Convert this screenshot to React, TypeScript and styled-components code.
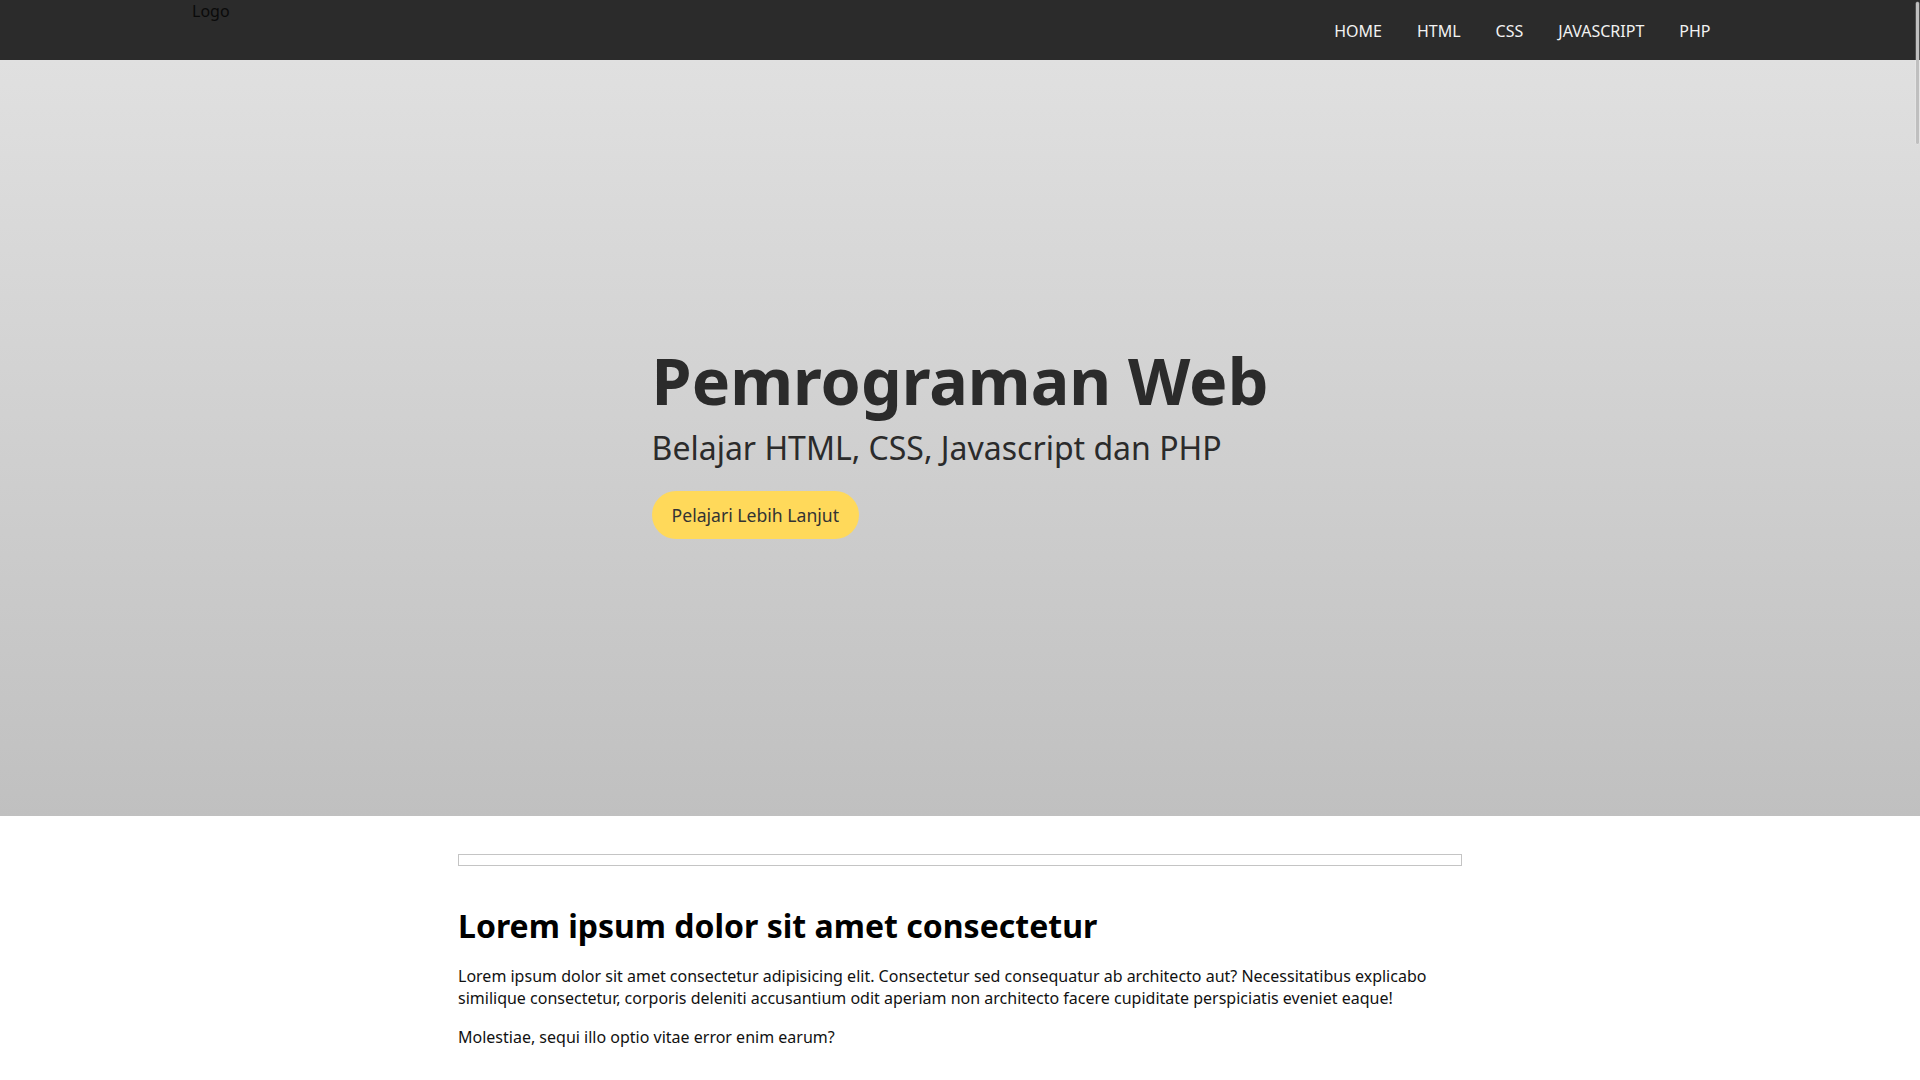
import React from "react";
import styled, { createGlobalStyle } from "styled-components";

const GlobalStyle = createGlobalStyle`
  * { box-sizing: border-box; }
  html, body { margin: 0; padding: 0; }
  body {
    font-family: "Noto Sans", "Open Sans", sans-serif;
    font-size: 16px;
    line-height: 1.4;
    color: #111;
    background: #fff;
  }
  ::-webkit-scrollbar { width: 4px; }
  ::-webkit-scrollbar-track { background: transparent; }
  ::-webkit-scrollbar-thumb { background: #c0c0c0; border-radius: 2px; }
`;

const ScrollThumb = styled.div`
  position: fixed;
  top: 2px;
  right: 1px;
  width: 3px;
  height: 142px;
  border-radius: 2px;
  background: #bfbfbf;
  box-shadow: 0 0 0 0.5px rgba(255, 255, 255, 0.35);
  pointer-events: none;
  z-index: 10;
`;

const Header = styled.header`
  height: 60px;
  background: #2b2b2b;
`;

const HeaderInner = styled.div`
  width: 80%;
  height: 100%;
  margin: 0 auto;
  display: flex;
  justify-content: space-between;
  align-items: center;
`;

const Logo = styled.div`
  align-self: flex-start;
  color: #0a0a0a;
  font-size: 16px;
`;

const NavList = styled.ul`
  list-style: none;
  margin: 0;
  padding: 0;
  display: flex;
  align-items: center;
`;

const NavItem = styled.li`
  padding: 0 17.5px;
  position: relative;
  top: 1px;
`;

const NavLink = styled.a`
  color: #f2f2f2;
  text-decoration: none;
  font-size: 16px;
`;

const Hero = styled.section`
  height: 70vh;
  background: linear-gradient(#e0e0e0, #c0c0c0);
  display: flex;
  align-items: center;
  justify-content: center;
`;

const HeroContent = styled.div`
  color: #2b2b2b;
`;

const HeroTitle = styled.h1`
  margin: 0;
  font-size: 64.5px;
  line-height: 87px;
  font-weight: 700;
`;

const HeroSubtitle = styled.p`
  margin: 0;
  font-size: 32px;
  line-height: 48px;
  font-weight: 400;
`;

const HeroButton = styled.a`
  display: inline-flex;
  align-items: center;
  height: 48px;
  margin-top: 19px;
  padding: 0 20px;
  border-radius: 24px;
  background: #ffd95a;
  color: #333;
  font-size: 17.6px;
  text-decoration: none;
`;

const Main = styled.main`
  width: 1004px;
  margin: 0 auto;
  padding-top: 38px;
  min-height: 7400px;
`;

const SearchBox = styled.div`
  height: 12px;
  border: 1px solid #c4c4c4;
`;

const Article = styled.article`
  padding-top: 38px;
`;

const ArticleTitle = styled.h2`
  margin: 0 0 16px;
  font-size: 32px;
  line-height: 1.4;
  font-weight: 700;
  color: #000;
`;

const Paragraph = styled.p`
  margin: 16px 0;
  font-size: 16px;
  line-height: 1.4;
  color: #111;
`;

const navItems = ["HOME", "HTML", "CSS", "JAVASCRIPT", "PHP"];

export default function App() {
  return (
    <>
      <GlobalStyle />
      <ScrollThumb aria-hidden="true" />
      <Header>
        <HeaderInner>
          <Logo>Logo</Logo>
          <nav>
            <NavList>
              {navItems.map((item) => (
                <NavItem key={item}>
                  <NavLink href="#">{item}</NavLink>
                </NavItem>
              ))}
            </NavList>
          </nav>
        </HeaderInner>
      </Header>
      <Hero>
        <HeroContent>
          <HeroTitle>Pemrograman Web</HeroTitle>
          <HeroSubtitle>Belajar HTML, CSS, Javascript dan PHP</HeroSubtitle>
          <HeroButton href="#">Pelajari Lebih Lanjut</HeroButton>
        </HeroContent>
      </Hero>
      <Main>
        <SearchBox />
        <Article>
          <ArticleTitle>Lorem ipsum dolor sit amet consectetur</ArticleTitle>
          <Paragraph>
            Lorem ipsum dolor sit amet consectetur adipisicing elit. Consectetur sed consequatur ab
            architecto aut? Necessitatibus explicabo similique consectetur, corporis deleniti
            accusantium odit aperiam non architecto facere cupiditate perspiciatis eveniet eaque!
          </Paragraph>
          <Paragraph>Molestiae, sequi illo optio vitae error enim earum?</Paragraph>
        </Article>
      </Main>
    </>
  );
}
